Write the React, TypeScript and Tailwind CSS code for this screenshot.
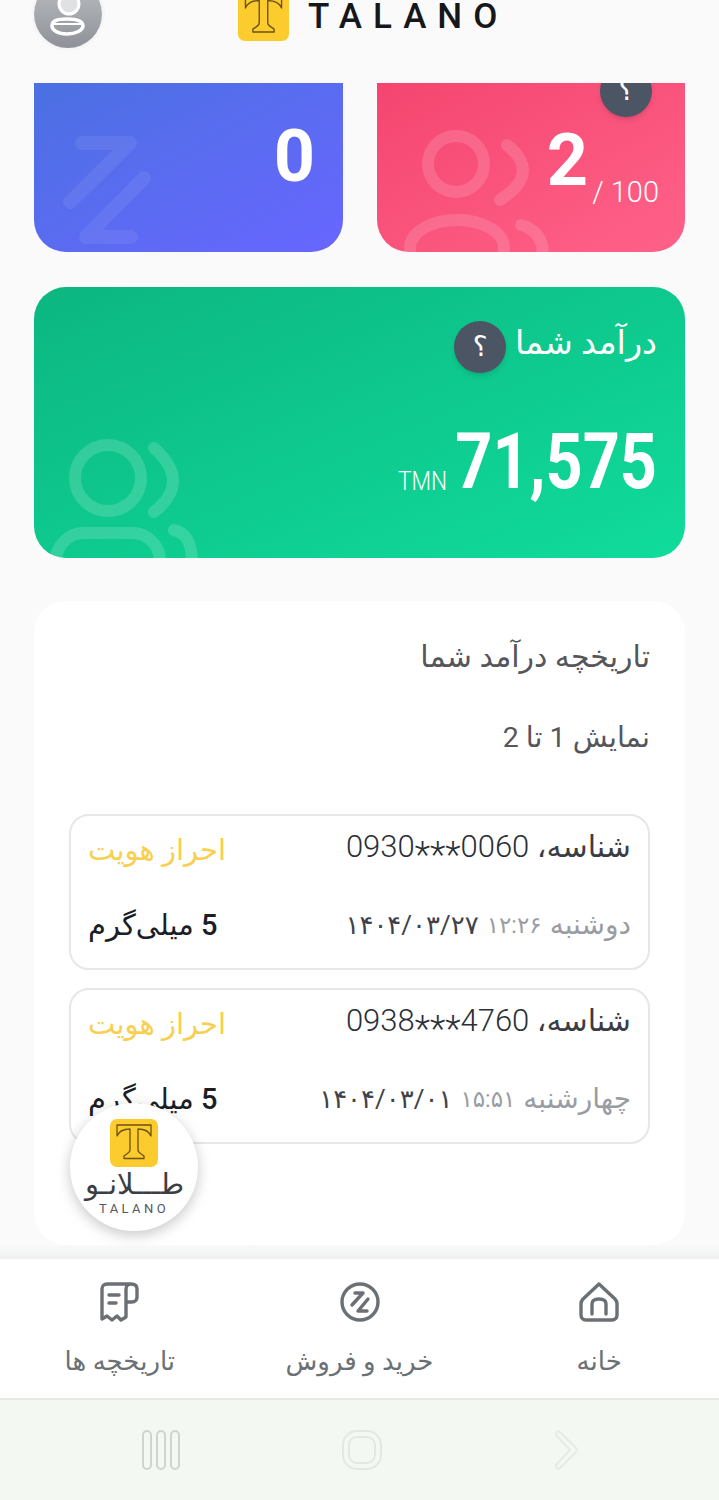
import React from "react";

const FONT = "[font-family:'Roboto','DejaVu_Sans',sans-serif]";

function LogoMark({ size }: { size: number }) {
  return (
    <div className="flex items-center justify-center rounded-[7px] bg-[#fccb2e]" style={{ width: size, height: size }}>
      <svg viewBox="0 0 48 48" width={size} height={size} fill="none" stroke="#6b5310" strokeWidth="1.3" strokeLinejoin="round">
        <path d="M7 6H41V17C39 12 35 10 28 10V31C28 34 32 35 34 37V39.5H14V37C16 35 20 34 20 31V10C13 10 9 12 7 17Z" />
      </svg>
    </div>
  );
}

function Help({ cls = "" }: { cls?: string }) {
  return (
    <div className={`flex h-[52px] w-[52px] shrink-0 items-center justify-center rounded-full bg-[#4b5563] text-[28px] font-normal text-white shadow-md ${cls}`}>
      ؟
    </div>
  );
}

function Entry({ id, date, time, day }: { id: React.ReactNode; date: string; time: string; day: string }) {
  return (
    <div className="flex h-[156px] flex-col rounded-[20px] border-2 border-[#e6e7e9] bg-white pl-[17px] pr-[17px]">
      <div className="mt-[16px] flex h-[36px] items-center justify-between">
        <div className="mt-[4px] text-[30px] leading-none text-[#3a3d45]">
          شناسه، <span dir="ltr" className="inline-block text-[31px] font-light text-[#2b2f38]">{id}</span>
        </div>
        <div className="text-[29px] leading-none text-[#f8cf50]">احراز هویت</div>
      </div>
      <div className="mt-[39px] flex h-[36px] items-center justify-between">
        <div className="flex items-center gap-[8px] text-[28px] leading-none text-[#9a9ca3]">
          <span>{day}</span>
          <span dir="ltr" className="text-[23px]">{time}</span>
          <span dir="ltr" className="text-[26px] tracking-[4.5px] text-[#3f424a]">{date}</span>
        </div>
        <div className="text-[29px] font-medium leading-none text-[#1b1e26]">
          <span>5</span> میلی‌گرم
        </div>
      </div>
    </div>
  );
}

function NavItem({ label, children }: { label: string; children: React.ReactNode }) {
  return (
    <div className="flex flex-col items-center">
      <div className="mt-[22px] h-[42px]">{children}</div>
      <div className="mt-[23px] text-[26px] leading-[30px] text-[#6b7075]">{label}</div>
    </div>
  );
}

export default function App() {
  return (
    <div dir="rtl" className={`relative flex h-[1500px] w-[719px] flex-col overflow-hidden bg-[#fafafa] ${FONT}`}>
      <header dir="ltr" className="flex h-[83px] shrink-0 items-start px-[34px]">
        <div className="-mt-[20px] h-[68px] w-[68px] shrink-0 overflow-hidden rounded-full bg-linear-to-b from-[#bcbfc3] to-[#8e9298] shadow-[0_0_0_3px_#f6f6f6]">
          <svg viewBox="0 0 68 68" width="68" height="68" fill="none">
            <circle cx="35" cy="24" r="10" fill="#dfe1e3" stroke="#fff" strokeWidth="3" />
            <path d="M18 46C18 41 22 39 33 39S49 41 49 46C49 50 42 54 33 54S18 50 18 46Z" stroke="#fff" strokeWidth="3.5" />
            <path d="M19 44H48" stroke="#fff" strokeWidth="2" />
          </svg>
        </div>
        <div className="-mt-[10px] ml-[136px]">
          <LogoMark size={51} />
        </div>
        <div className="ml-[19px] text-[35px] font-medium leading-[34px] tracking-[11px] text-[#16171a]">TALANO</div>
      </header>

      <section className="flex h-[169px] shrink-0 gap-[34px] overflow-hidden px-[34px]">
        <div className="relative flex h-full w-[308px] overflow-hidden rounded-b-[32px] bg-linear-to-br from-[#f4456f] to-[#ff6189] pr-[26px] text-white">
          <svg className="absolute inset-0" viewBox="0 0 308 169" width="308" height="169" fill="none" stroke="#fff" strokeOpacity="0.14" strokeWidth="12" strokeLinecap="round">
            <circle cx="79" cy="81" r="28" />
            <path d="M130 62Q165 90 123 117" />
            <ellipse cx="80" cy="165" rx="47" ry="28" />
            <path d="M144 142Q166 148 166 172" />
          </svg>
          <div dir="ltr" className="relative mt-[38px] flex h-[90px] w-full items-start justify-end">
            <span className="text-[72px] font-bold leading-[80px]">2</span>
            <span className="ml-[4px] mt-[53px] text-[29px] font-light leading-[36px]">/ 100</span>
          </div>
          <Help cls="absolute left-[223px] -top-[18px]" />
        </div>
        <div className="relative flex h-full w-[309px] justify-start overflow-hidden rounded-b-[32px] bg-linear-to-br from-[#4a70e2] to-[#6866ff] pr-[28px] text-white">
          <svg className="absolute inset-0" viewBox="0 0 309 169" width="309" height="169" fill="none" stroke="#fff" strokeOpacity="0.07" strokeWidth="14" strokeLinecap="round" strokeLinejoin="round">
            <path d="M48 60H96L36 119" />
            <path d="M110 95L52 154H97" />
          </svg>
          <span className="relative mt-[34px] text-[72px] font-bold leading-[80px]">0</span>
        </div>
      </section>

      <section className="relative mx-[34px] mt-[35px] flex h-[271px] shrink-0 flex-col overflow-hidden rounded-[32px] bg-linear-to-br from-[#0cb680] to-[#10dc9b] px-[28px] text-white">
        <svg className="absolute inset-0" viewBox="0 0 651 271" width="651" height="271" fill="none" stroke="#fff" strokeOpacity="0.16" strokeWidth="12" strokeLinecap="round">
          <circle cx="74" cy="191" r="33" />
          <path d="M120 161Q158 195 120 225" />
          <rect x="22" y="246" width="104" height="70" rx="28" />
          <path d="M140 243Q158 247 158 275" />
        </svg>
        <div className="relative mt-[34px] flex h-[52px] items-center gap-[9px]">
          <span className="-mt-[8px] text-[33.5px] leading-none">درآمد شما</span>
          <Help />
        </div>
        <div dir="ltr" className="relative mt-[49px] flex h-[80px] items-end justify-end">
          <span className="mb-[7px] mr-[10px] w-[48px] whitespace-nowrap text-[26px] leading-[28px]">
            <span className="inline-block origin-left scale-x-[0.87] font-light">TMN</span>
          </span>
          <span className="flex w-[201px] justify-end whitespace-nowrap text-[78px] font-bold leading-[80px]">
            <span className="inline-block origin-right scale-x-[0.83]">71,575</span>
          </span>
        </div>
      </section>

      <section className="mx-[34px] mt-[43px] flex h-[644px] shrink-0 flex-col rounded-[32px] bg-white px-[35px]">
        <h2 className="mt-[36px] text-[30px] font-normal leading-[40px] text-[#54565c]">تاریخچه درآمد شما</h2>
        <p className="mt-[41px] text-[28.5px] leading-[40px] text-[#54565c]">نمایش 1 تا 2</p>
        <div className="mt-[56px] flex flex-col gap-[18px]">
          <Entry id={<>0930<span className="align-[-10px] text-[36px] leading-none">***</span>0060</>} day="دوشنبه" time="۱۲:۲۶" date="۱۴۰۴/۰۳/۲۷" />
          <Entry id={<>0938<span className="align-[-10px] text-[36px] leading-none">***</span>4760</>} day="چهارشنبه" time="۱۵:۵۱" date="۱۴۰۴/۰۳/۰۱" />
        </div>
      </section>

      <div className="h-[14px] shrink-0 bg-linear-to-b from-[#fafafa] to-[#eff0f2]" />

      <nav className="grid h-[139px] shrink-0 grid-cols-3 bg-white">
        <NavItem label="خانه">
          <svg width="42" height="42" viewBox="0 0 42 42" fill="none" stroke="#6b7075" strokeWidth="3.4" strokeLinejoin="round" strokeLinecap="round">
            <path d="M21 3L37 18C38 19 39 21 39 23V34C39 37 37 39 34 39H8C5 39 3 37 3 34V23C3 21 4 19 5 18Z" />
            <path d="M14 33V23C14 20 16 18 21 18S28 20 28 23V33" />
          </svg>
        </NavItem>
        <NavItem label="خرید و فروش">
          <svg width="42" height="42" viewBox="0 0 42 42" fill="none" stroke="#6b7075" strokeWidth="3.4" strokeLinejoin="round" strokeLinecap="round">
            <circle cx="21" cy="21" r="18" />
            <path d="M16 12H24L13 24" />
            <path d="M29 18L19 30H28" />
          </svg>
        </NavItem>
        <NavItem label="تاریخچه ها">
          <svg width="42" height="42" viewBox="0 0 42 42" fill="none" stroke="#6b7075" strokeWidth="3.4" strokeLinejoin="round" strokeLinecap="round">
            <path d="M32 3H8C5 3 3 5 3 8V38L8 35L13 39L18 35L22 39L27 36V8C27 5 29 3 32 3C36 3 38 5 38 8V16C38 19 36 21 33 21H27" />
            <path d="M10 14H20M10 22H17" />
          </svg>
        </NavItem>
      </nav>

      <div className="flex flex-1 items-center border-t-2 border-[#e6e9e1] bg-[#f4f8f3] pr-[141px]">
        <svg width="25" height="42" viewBox="0 0 25 42" fill="none" stroke="#e7ebe4" strokeWidth="2" strokeLinejoin="round">
          <path d="M3 6C2 4 5 1 7 3L23 19C24 20 24 22 23 23L7 39C5 41 2 38 3 36L17 21Z" />
        </svg>
        <svg className="mr-[171px]" width="40" height="40" viewBox="0 0 40 40" fill="none" stroke="#e4e8e1" strokeWidth="2">
          <rect x="1" y="1" width="38" height="38" rx="14" />
          <rect x="7" y="7" width="26" height="26" rx="8" />
        </svg>
        <svg className="mr-[162px]" width="38" height="40" viewBox="0 0 38 40" fill="none" stroke="#cfd4cd" strokeWidth="2">
          <rect x="1" y="1" width="8" height="38" rx="4" />
          <rect x="15" y="1" width="8" height="38" rx="4" />
          <rect x="29" y="1" width="8" height="38" rx="4" />
        </svg>
      </div>

      <div className="absolute left-[70px] top-[1103px] flex h-[128px] w-[128px] flex-col items-center rounded-full bg-white pt-[16px] shadow-[0_4px_14px_rgba(0,0,0,0.22)]">
        <LogoMark size={48} />
        <div className="-mt-[2px] text-[29px] font-light leading-[38px] text-[#3c3e42]">طـــلانـو</div>
        <div className="-mt-[1px] text-[13px] leading-[14px] tracking-[3.4px] text-[#55585c]" dir="ltr">TALANO</div>
      </div>
    </div>
  );
}
